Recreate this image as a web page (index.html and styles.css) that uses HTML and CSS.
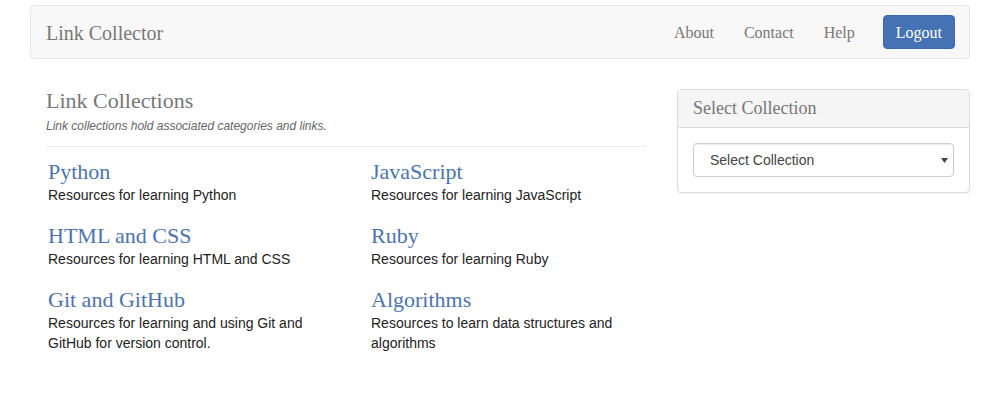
FILE: index.html
```html
<!DOCTYPE html>
<html lang="en">
<head>
<meta charset="utf-8">
<title>Link Collector</title>
<link rel="stylesheet" href="styles.css">
</head>
<body>
<div class="container">
  <nav class="navbar">
    <a class="brand" href="#">Link Collector</a>
    <ul class="nav-links">
      <li><a href="#">About</a></li>
      <li><a href="#">Contact</a></li>
      <li><a href="#">Help</a></li>
    </ul>
    <button class="btn-logout" type="button">Logout</button>
  </nav>

  <main class="main">
    <section class="content">
      <h1 class="page-title">Link Collections</h1>
      <p class="subtitle">Link collections hold associated categories and links.</p>
      <hr class="divider">
      <div class="collections">
        <div class="item">
          <a class="item-title" href="#">Python</a>
          <p class="item-desc">Resources for learning Python</p>
        </div>
        <div class="item">
          <a class="item-title" href="#">JavaScript</a>
          <p class="item-desc">Resources for learning JavaScript</p>
        </div>
        <div class="item">
          <a class="item-title" href="#">HTML and CSS</a>
          <p class="item-desc">Resources for learning HTML and CSS</p>
        </div>
        <div class="item">
          <a class="item-title" href="#">Ruby</a>
          <p class="item-desc">Resources for learning Ruby</p>
        </div>
        <div class="item">
          <a class="item-title" href="#">Git and GitHub</a>
          <p class="item-desc">Resources for learning and using Git and GitHub for version control.</p>
        </div>
        <div class="item">
          <a class="item-title" href="#">Algorithms</a>
          <p class="item-desc">Resources to learn data structures and algorithms</p>
        </div>
      </div>
    </section>

    <aside class="panel">
      <div class="panel-heading">Select Collection</div>
      <div class="panel-body">
        <div class="select-wrap">
          <select class="select">
            <option>Select Collection</option>
            <option>Python</option>
            <option>JavaScript</option>
            <option>HTML and CSS</option>
            <option>Ruby</option>
            <option>Git and GitHub</option>
            <option>Algorithms</option>
          </select>
          <svg class="select-arrow" width="7" height="5" viewBox="0 0 7 5" aria-hidden="true"><polygon points="0,0 7,0 3.5,5" fill="#444"/></svg>
        </div>
      </div>
    </aside>
  </main>
</div>
</body>
</html>
```

FILE: styles.css
```css
* { box-sizing: border-box; }

html, body {
  margin: 0;
  padding: 0;
  background: #fff;
}

body {
  font-family: "Liberation Sans", Arial, sans-serif;
  font-size: 14px;
  line-height: 20px;
  color: #333;
}

a { text-decoration: none; }

.container {
  width: 940px;
  margin: 0 auto;
}

/* Navbar */
.navbar {
  margin-top: 5px;
  height: 54px;
  border: 1px solid #e7e7e7;
  border-radius: 4px;
  background: #f8f8f8;
  display: flex;
  align-items: center;
  padding: 0 14px 0 15px;
}

.brand {
  font-family: "Liberation Serif", "Times New Roman", serif;
  font-size: 20px;
  line-height: 24px;
  color: #777;
  padding-top: 1px;
}

.nav-links {
  list-style: none;
  margin: 0 0 0 auto;
  padding: 0;
  display: flex;
}

.nav-links a {
  display: block;
  padding: 1px 15px 0;
  font-family: "Liberation Serif", "Times New Roman", serif;
  font-size: 16px;
  line-height: 20px;
  color: #777;
}

.btn-logout {
  margin-left: 13px;
  height: 34px;
  padding: 1px 12px 0;
  border: 1px solid #3f6aa8;
  border-radius: 4px;
  background: #4572b4;
  color: #fff;
  font-family: "Liberation Serif", "Times New Roman", serif;
  font-size: 16px;
  line-height: 20px;
  cursor: pointer;
}

/* Main layout */
.main {
  display: flex;
  justify-content: space-between;
  align-items: flex-start;
  padding-top: 30px;
}

.content {
  width: 616px;
  padding-left: 16px;
}

.page-title {
  margin: 0;
  font-family: "Liberation Serif", "Times New Roman", serif;
  font-weight: normal;
  font-size: 22px;
  line-height: 24px;
  color: #777;
}

.subtitle {
  margin: 5px 0 0;
  font-size: 12px;
  line-height: 16px;
  font-style: italic;
  color: #666;
}

.divider {
  margin: 12px 0 0;
  border: 0;
  border-top: 1px solid #eee;
  height: 0;
}

.collections {
  margin-top: 12px;
  padding-left: 2px;
  display: grid;
  grid-template-columns: 300px 275px;
  column-gap: 23px;
  row-gap: 18px;
}

.item-title {
  display: block;
  font-family: "Liberation Serif", "Times New Roman", serif;
  font-size: 22px;
  line-height: 25px;
  color: #4a74b4;
}

.item-desc {
  margin: 1px 0 0;
  font-size: 14px;
  line-height: 20px;
  color: #222;
}

/* Panel */
.panel {
  width: 293px;
  border: 1px solid #ddd;
  border-radius: 4px;
  background: #fff;
  box-shadow: 0 1px 1px rgba(0, 0, 0, 0.05);
}

.panel-heading {
  padding: 10px 15px;
  font-family: "Liberation Serif", "Times New Roman", serif;
  font-size: 18px;
  line-height: 17px;
  color: #777;
  background: #f5f5f5;
  border-bottom: 1px solid #ddd;
  border-radius: 3px 3px 0 0;
}

.panel-body {
  padding: 15px;
}

.select-wrap {
  position: relative;
}

.select {
  display: block;
  width: 100%;
  height: 34px;
  padding: 0 24px 0 16px;
  border: 1px solid #ccc;
  border-radius: 4px;
  background: #fff;
  font-family: "Liberation Sans", Arial, sans-serif;
  font-size: 14px;
  color: #444;
  -webkit-appearance: none;
  appearance: none;
  box-shadow: inset 0 1px 1px rgba(0, 0, 0, 0.075);
}

.select-arrow {
  position: absolute;
  right: 6px;
  top: 15px;
  pointer-events: none;
}
```
